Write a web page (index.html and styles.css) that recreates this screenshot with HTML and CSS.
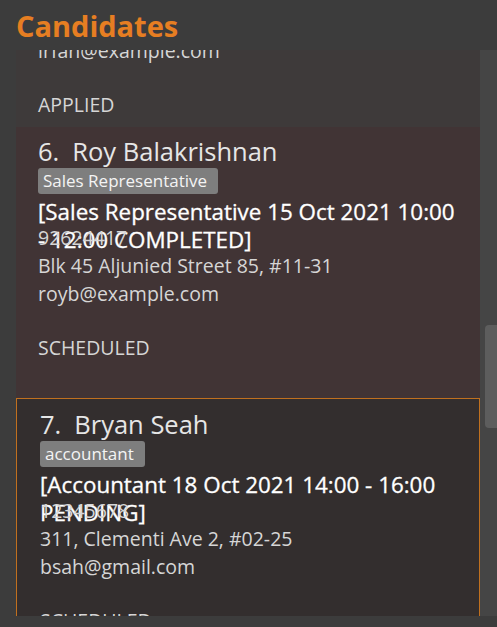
FILE: index.html
```html
<!DOCTYPE html>
<html lang="en">
<head>
<meta charset="utf-8">
<title>Candidates</title>
<link rel="stylesheet" href="styles.css">
</head>
<body>
<div class="app">
  <h1 class="title">Candidates</h1>
  <div class="list-view">
    <div class="list-viewport">
      <div class="list-content">
        <div class="card card-plain">
          <div class="name-row"><span class="index">5.</span><span class="name">Irfan Ibrahim</span></div>
          <div class="tags"><span class="tag">classmates</span></div>
          <div class="interview">[Software Engineer 12 Oct 2021 09:00]</div>
          <div class="info">92492021</div>
          <div class="info">Blk 47 Tampines Street 20, #17-35</div>
          <div class="info">irfan@example.com</div>
          <div class="info status">APPLIED</div>
        </div>
        <div class="card card-alt wrapped">
          <div class="name-row"><span class="index">6.</span><span class="name">Roy Balakrishnan</span></div>
          <div class="tags"><span class="tag">Sales Representative</span></div>
          <div class="interview">[Sales Representative 15 Oct 2021 10:00 - 12:00 COMPLETED]</div>
          <div class="info">92624417</div>
          <div class="info">Blk 45 Aljunied Street 85, #11-31</div>
          <div class="info">royb@example.com</div>
          <div class="info status">SCHEDULED</div>
        </div>
        <div class="card card-plain selected">
          <div class="name-row"><span class="index">7.</span><span class="name">Bryan Seah</span></div>
          <div class="tags"><span class="tag">accountant</span></div>
          <div class="interview">[Accountant 18 Oct 2021 14:00 - 16:00 PENDING]</div>
          <div class="info">12345678</div>
          <div class="info">311, Clementi Ave 2, #02-25</div>
          <div class="info">bsah@gmail.com</div>
          <div class="info status">SCHEDULED</div>
        </div>
      </div>
    </div>
    <div class="scrollbar"><div class="thumb"></div></div>
  </div>
</div>
</body>
</html>
```

FILE: styles.css
```css
* {
  box-sizing: border-box;
}

html,
body {
  margin: 0;
  padding: 0;
}

body {
  background: #3c3c3c;
  width: 497px;
  height: 627px;
  overflow: hidden;
  font-family: "Open Sans", "Noto Sans", sans-serif;
}

.title {
  margin: 0;
  height: 50px;
  padding: 2px 0 0 16px;
  line-height: 48px;
  font-size: 29px;
  font-weight: 700;
  color: #e67e22;
}

.list-view {
  display: flex;
  height: 566px;
  margin-left: 16px;
}

.list-viewport {
  flex: 1;
  overflow: hidden;
}

.list-content {
  margin-top: -166px;
}

.card {
  padding: 9px 15px 8px 22px;
}

.card-plain {
  background: #3e3a3a;
}

.card-alt {
  background: #413435;
}

.card.wrapped {
  padding-bottom: 36px;
}

.card.selected {
  background: #332e2e;
  border: 1px solid #c0701f;
  padding: 10px 14px 8px 23px;
}

.name-row {
  display: flex;
  gap: 13px;
  height: 30px;
  line-height: 30px;
  font-size: 25.5px;
  color: #e6e6e6;
}

.tags {
  margin-top: 2px;
  height: 26px;
  display: flex;
}

.tag {
  display: block;
  height: 26px;
  line-height: 26px;
  padding: 0 11px 0 5px;
  background: #7e7e7e;
  border-radius: 3px;
  font-size: 17px;
  color: #f4f4f4;
}

.interview {
  margin-top: 4px;
  height: 26px;
  line-height: 28px;
  font-size: 22.4px;
  color: #ffffff;
  -webkit-text-stroke: 0.3px #ffffff;
}

.info {
  height: 28px;
  line-height: 28px;
  font-size: 19.5px;
  color: #d6d6d6;
  white-space: nowrap;
}

.status {
  margin-top: 26px;
}

.scrollbar {
  width: 17px;
  background: #454545;
  padding: 275px 0 0 5px;
}

.thumb {
  height: 103px;
  background: #5d5d5d;
  border-radius: 4px 0 0 4px;
}
```
